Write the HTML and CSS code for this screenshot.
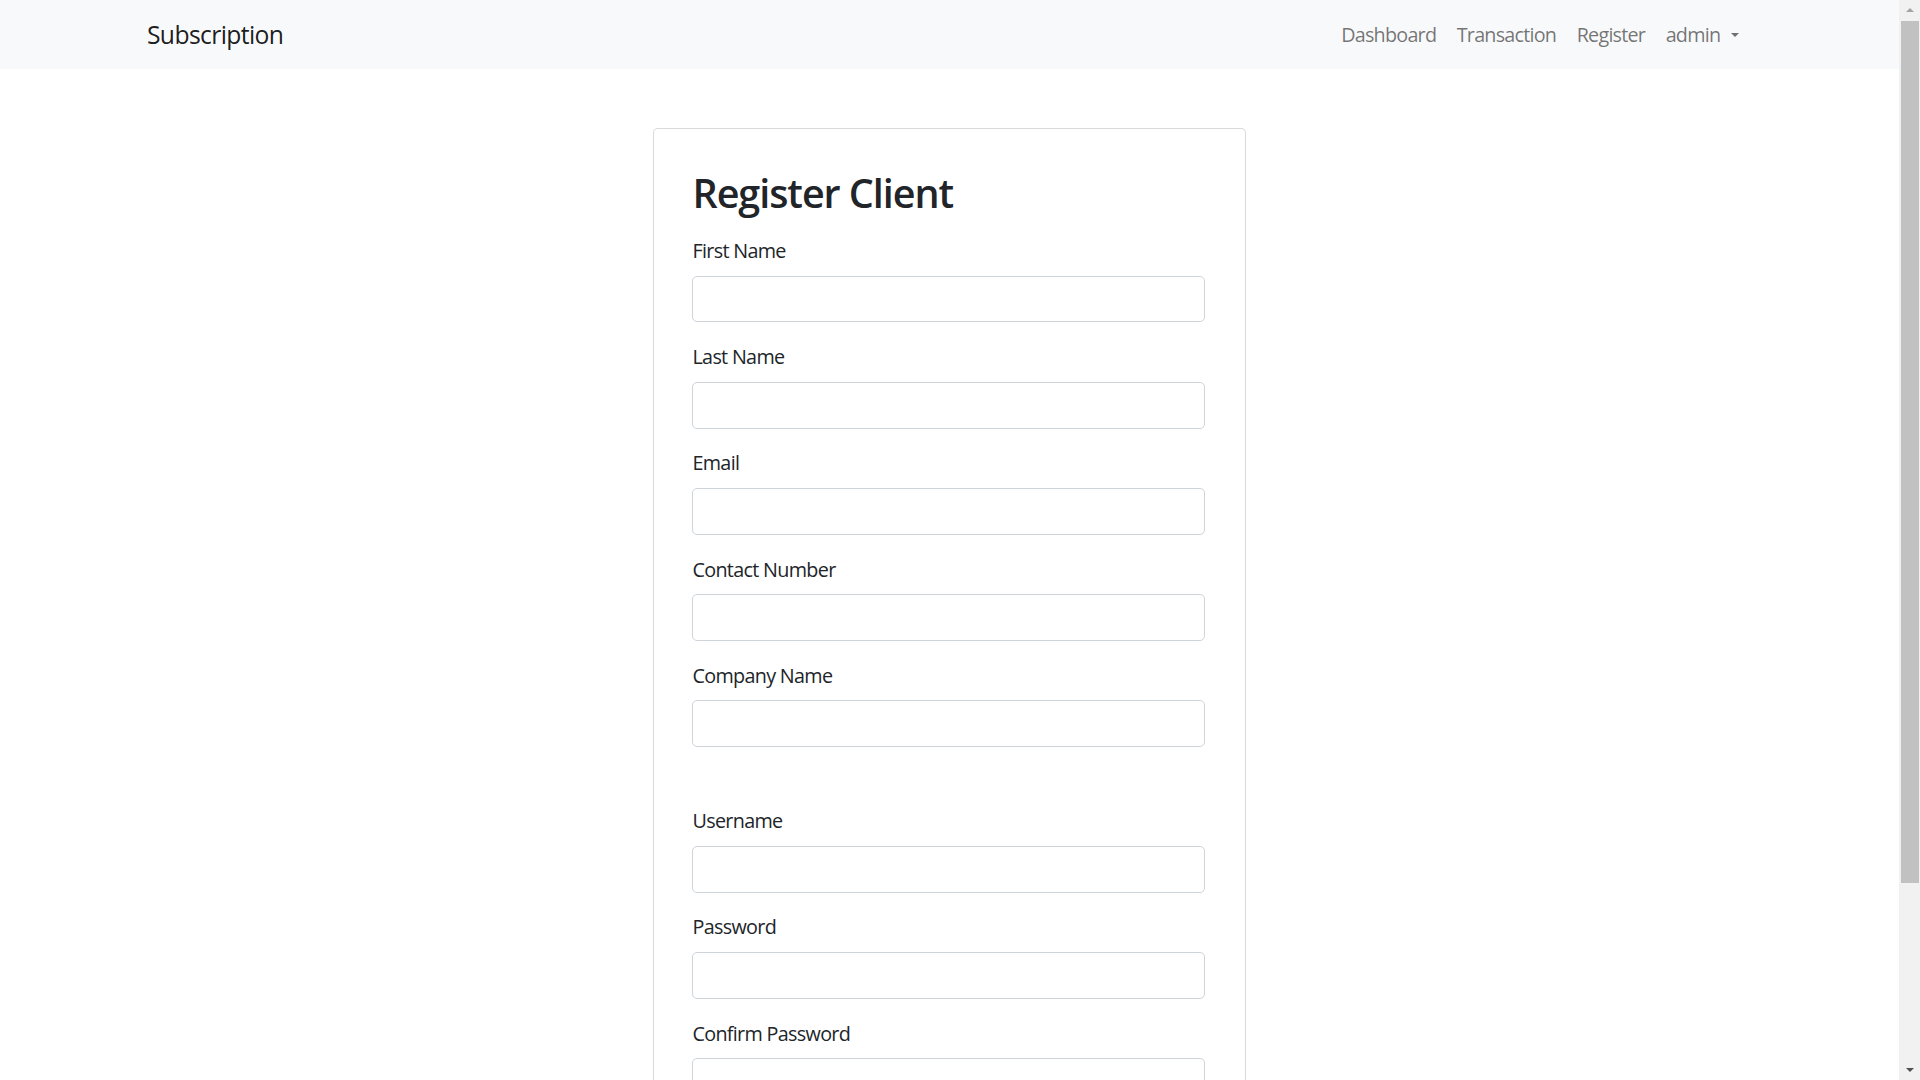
FILE: index.html
```html
<!DOCTYPE html>
<html lang="en">
<head>
<meta charset="utf-8">
<title>Register Client</title>
<link rel="stylesheet" href="styles.css">
</head>
<body>
<nav class="navbar">
  <div class="container nav-inner">
    <a class="brand" href="#">Subscription</a>
    <ul class="nav-links">
      <li><a class="nav-link" href="#">Dashboard</a></li>
      <li><a class="nav-link" href="#">Transaction</a></li>
      <li><a class="nav-link" href="#">Register</a></li>
      <li><a class="nav-link dropdown-toggle" href="#">admin</a></li>
    </ul>
  </div>
</nav>
<main class="container page">
  <div class="card">
    <form class="card-body">
      <h1 class="title">Register Client</h1>
      <div class="field"><label class="label">First Name</label><input class="input" type="text"></div>
      <div class="field"><label class="label">Last Name</label><input class="input" type="text"></div>
      <div class="field"><label class="label">Email</label><input class="input" type="email"></div>
      <div class="field"><label class="label">Contact Number</label><input class="input" type="text"></div>
      <div class="field"><label class="label">Company Name</label><input class="input" type="text"></div>
      <div class="spacer"></div>
      <div class="field"><label class="label">Username</label><input class="input" type="text"></div>
      <div class="field"><label class="label">Password</label><input class="input" type="password"></div>
      <div class="field"><label class="label">Confirm Password</label><input class="input" type="password"></div>
      <button class="btn" type="button">Register</button>
    </form>
  </div>
</main>
<div class="scrollbar" aria-hidden="true">
  <div class="sb-btn"><span class="sb-up"></span></div>
  <div class="sb-track"><div class="sb-thumb"></div></div>
  <div class="sb-btn"><span class="sb-down"></span></div>
</div>
</body>
</html>
```
FILE: styles.css
```css
html {
  zoom: 1.2347;
}
* {
  box-sizing: border-box;
}
body {
  margin: 0 17px 0 0;
  font-family: "Open Sans", "Noto Sans", sans-serif;
  font-size: 16px;
  line-height: 1.5;
  letter-spacing: -0.55px;
  color: #212529;
  background: #fff;
}
.container {
  width: 100%;
  max-width: 1320px;
  margin: 0 auto;
  padding: 0 12px;
}
.navbar {
  background: #f8f9fa;
  padding: 8px 0;
}
.nav-inner {
  display: flex;
  align-items: center;
  justify-content: space-between;
}
.brand {
  margin-left: -2px;
  font-size: 20px;
  line-height: 30px;
  padding: 5px 0;
  letter-spacing: -0.5px;
  color: rgba(0, 0, 0, 0.9);
  text-decoration: none;
}
.nav-links {
  display: flex;
  list-style: none;
  margin: 0;
  padding: 0;
}
.nav-link {
  display: block;
  padding: 8px 8.3px;
  letter-spacing: -0.62px;
  color: rgba(0, 0, 0, 0.55);
  text-decoration: none;
}
.dropdown-toggle::after {
  content: "";
  display: inline-block;
  margin-left: 9px;
  vertical-align: 3.5px;
  border-top: 3.5px solid;
  border-right: 3.5px solid transparent;
  border-left: 3.5px solid transparent;
  border-bottom: 0;
}
.page {
  display: flex;
  justify-content: center;
  padding-top: 48px;
  padding-bottom: 72px;
}
.card {
  width: 480px;
  border: 1px solid rgba(0, 0, 0, 0.15);
  border-radius: 4px;
  background: #fff;
}
.card-body {
  padding: 32px 32px 32px 31px;
}
.title {
  margin: 1px 0 15px;
  font-size: 32px;
  font-weight: 600;
  line-height: 1.2;
  letter-spacing: -0.85px;
}
.field {
  margin-bottom: 16px;
}
.label {
  display: block;
  margin-bottom: 8px;
}
.input {
  display: block;
  width: 100%;
  height: 38px;
  padding: 6px 12px;
  font: inherit;
  color: #212529;
  border: 1px solid #ced4da;
  border-radius: 4px;
  background: #fff;
}
.spacer {
  height: 32px;
}
.btn {
  font: inherit;
  color: #fff;
  background: #0d6efd;
  border: 1px solid #0d6efd;
  border-radius: 4px;
  padding: 6px 12px;
}
.scrollbar {
  position: fixed;
  top: 0;
  right: 0;
  bottom: 0;
  width: 17px;
  display: flex;
  flex-direction: column;
  background: #f1f1f1;
}
.sb-btn {
  height: 17px;
  display: flex;
  align-items: center;
  justify-content: center;
}
.sb-up {
  border-bottom: 4px solid #a3a3a3;
  border-left: 4px solid transparent;
  border-right: 4px solid transparent;
}
.sb-down {
  border-top: 4px solid #505050;
  border-left: 4px solid transparent;
  border-right: 4px solid transparent;
}
.sb-track {
  flex: 1;
  padding: 0 1px 0 2px;
}
.sb-thumb {
  height: 698px;
  background: #c1c1c1;
}
```
